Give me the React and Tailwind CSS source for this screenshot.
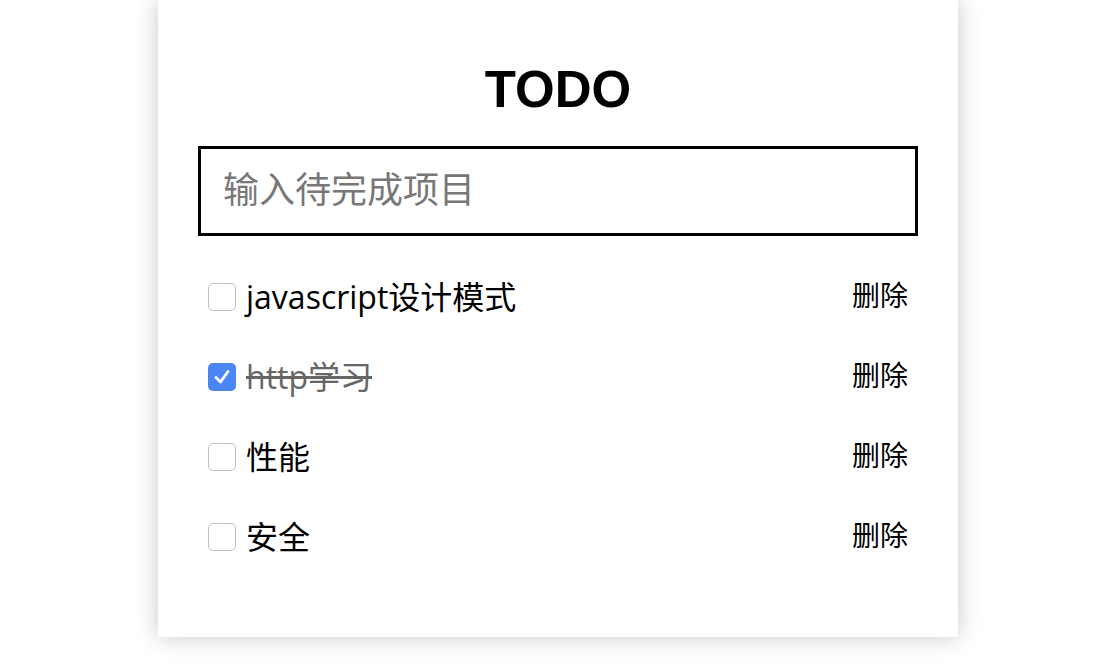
import React, { useState } from 'react';

const initial = [
  { id: 1, text: 'javascript设计模式', done: false },
  { id: 2, text: 'http学习', done: true },
  { id: 3, text: '性能', done: false },
  { id: 4, text: '安全', done: false },
];

const font = { fontFamily: '"Liberation Sans", "Noto Sans CJK SC", sans-serif' };
const itemFont = { fontFamily: '"Open Sans", "Noto Sans CJK SC", sans-serif' };

export default function App() {
  const [items, setItems] = useState(initial);
  const [value, setValue] = useState('');

  const toggle = (id) =>
    setItems(items.map((it) => (it.id === id ? { ...it, done: !it.done } : it)));
  const remove = (id) => setItems(items.filter((it) => it.id !== id));

  return (
    <div className="min-h-screen bg-white" style={font}>
      <div className="w-[800px] mx-auto bg-white shadow-[0_0_22px_rgba(0,0,0,0.22)] px-[40px] pt-[60px] pb-[60px]">
        {/* Title */}
        <h1 className="text-center text-[51px] leading-[60px] font-bold text-black">TODO</h1>

        {/* Input */}
        <input
          value={value}
          onChange={(e) => setValue(e.target.value)}
          placeholder="输入待完成项目"
          className="mt-[26px] w-full h-[90px] border-[3px] border-black px-[22px] text-[36px] text-black placeholder:text-[#777] outline-none"
        />

        {/* List */}
        <ul className="mt-[21px]">
          {items.map((it) => (
            <li key={it.id} className="h-[80px] flex items-center justify-between px-[10px]">
              <label className="flex items-center gap-[10px] cursor-pointer">
                <button
                  onClick={() => toggle(it.id)}
                  className={`w-[28px] h-[28px] rounded-[5px] flex items-center justify-center ${
                    it.done ? 'bg-[#4a86f5]' : 'bg-white border border-[#c0c0c0]'
                  }`}
                >
                  {it.done && (
                    <svg width="22" height="22" viewBox="0 0 22 22" fill="none">
                      <path d="M5 11.5 L9.5 16 L17 5.5" stroke="white" strokeWidth="2.8" strokeLinecap="round" strokeLinejoin="round" />
                    </svg>
                  )}
                </button>
                <span
                  style={itemFont}
                  className={`text-[32px] leading-none ${
                    it.done ? 'line-through text-[#666]' : 'text-black'
                  }`}
                >
                  {it.text}
                </span>
              </label>
              <button onClick={() => remove(it.id)} className="text-[28px] leading-none text-black">
                删除
              </button>
            </li>
          ))}
        </ul>
      </div>
    </div>
  );
}
